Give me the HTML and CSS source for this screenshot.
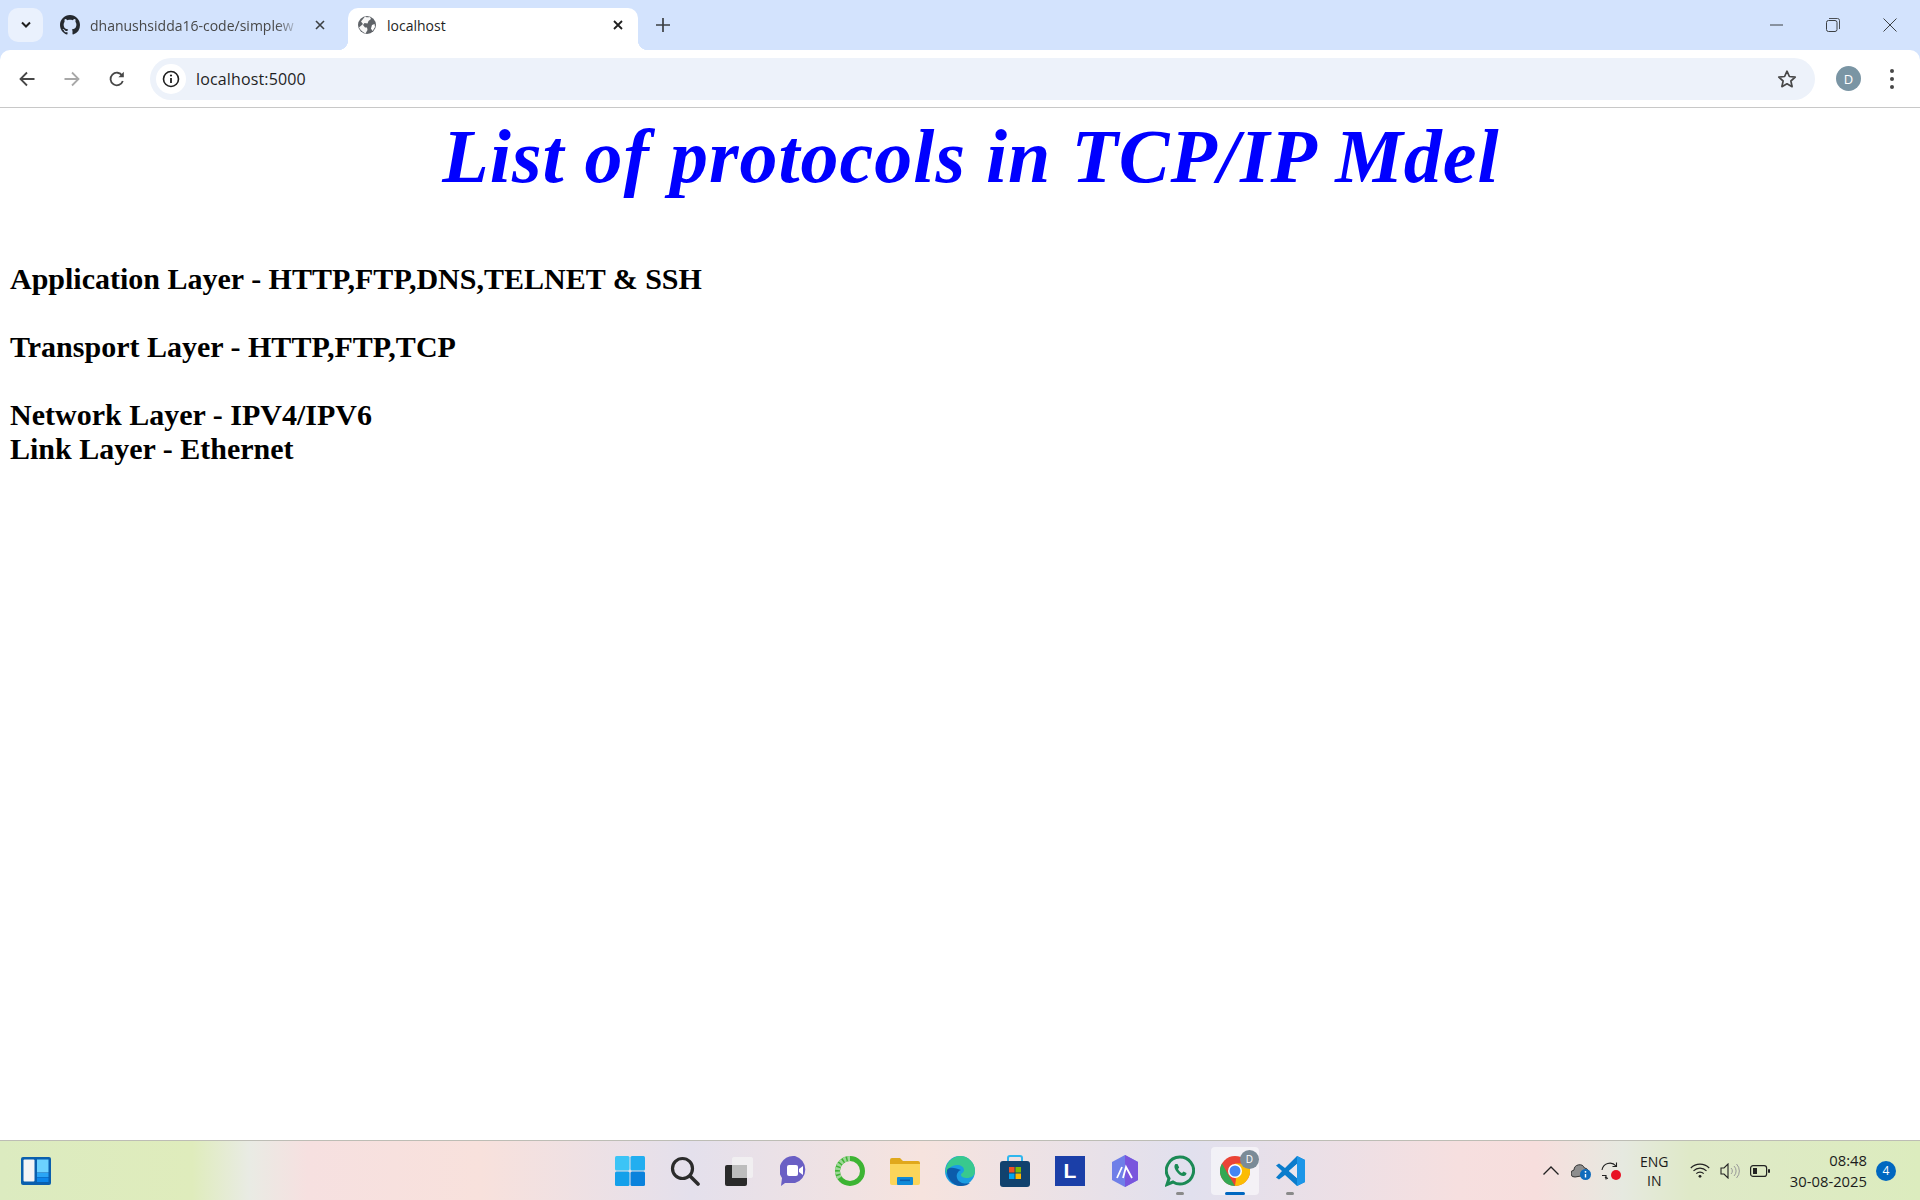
FILE: index.html
```html
<!DOCTYPE html>
<html lang="en">
<head>
<meta charset="UTF-8">
<title>localhost</title>
<link rel="stylesheet" href="styles.css">
</head>
<body>

  <header class="browser">
    <div class="tabstrip">
      <div class="tab-search">
        <svg width="12" height="8" viewBox="0 0 12 8"><path d="M2 1.5l4 4 4-4" fill="none" stroke="#1f1f1f" stroke-width="2"/></svg>
      </div>
      <div class="tab">
        <svg class="favicon" width="20" height="20" viewBox="0 0 16 16"><path fill="#24292f" d="M8 0C3.58 0 0 3.58 0 8c0 3.54 2.29 6.53 5.47 7.59.4.07.55-.17.55-.38 0-.19-.01-.82-.01-1.49-2.01.37-2.53-.49-2.69-.94-.09-.23-.48-.94-.82-1.13-.28-.15-.68-.52-.01-.53.63-.01 1.08.58 1.23.82.72 1.21 1.87.87 2.33.66.07-.52.28-.87.51-1.07-1.78-.2-3.64-.89-3.64-3.95 0-.87.31-1.59.82-2.15-.08-.2-.36-1.02.08-2.12 0 0 .67-.21 2.2.82.64-.18 1.32-.27 2-.27s1.36.09 2 .27c1.53-1.04 2.2-.82 2.2-.82.44 1.1.16 1.92.08 2.12.51.56.82 1.27.82 2.15 0 3.07-1.87 3.75-3.65 3.95.29.25.54.73.54 1.48 0 1.07-.01 1.93-.01 2.2 0 .21.15.46.55.38A8.01 8.01 0 0 0 16 8c0-4.42-3.58-8-8-8z"/></svg>
        <span class="tab-title tab-title-fade">dhanushsidda16-code/simplew</span>
        <svg class="tab-close" width="10" height="10" viewBox="0 0 10 10"><path d="M1 1l8 8M9 1l-8 8" stroke="#3c4043" stroke-width="1.6"/></svg>
      </div>
      <div class="tab tab-active">
        <svg class="favicon" width="20" height="20" viewBox="0 0 20 20"><circle cx="10" cy="10" r="9" fill="#5f6368"/><path fill="#fff" d="M8 1.5c1.5 1 3.5 1 5 .5l1 2-2.500 2-1 2.500-3-.5-1.500 2 2 2.500 2 0 .5 2.500-2 3.500c-2-1-5-3-6.500-6L6 9 4 6.500z" opacity=".95"/><path fill="#fff" d="M15 10l2.500-1 .5 3-2.500 4-1.500-2.500z"/></svg>
        <span class="tab-title tab-title-dark">localhost</span>
        <svg class="tab-close" width="10" height="10" viewBox="0 0 10 10"><path d="M1 1l8 8M9 1l-8 8" stroke="#1f1f1f" stroke-width="1.8"/></svg>
      </div>
      <svg class="new-tab" width="14" height="14" viewBox="0 0 14 14"><path d="M7 0v14M0 7h14" stroke="#3c4043" stroke-width="1.7"/></svg>
      <div class="window-controls">
        <svg width="13" height="2" viewBox="0 0 13 2"><path d="M0 1h13" stroke="#3c4043" stroke-width="1"/></svg>
        <svg width="14" height="14" viewBox="0 0 14 14"><rect x=".5" y="2.500" width="10.500" height="11" rx="2" fill="none" stroke="#3c4043"/><path d="M3 .5h8.500a2 2 0 0 1 2 2V11" fill="none" stroke="#3c4043" stroke-width=".9"/></svg>
        <svg width="14" height="14" viewBox="0 0 14 14"><path d="M.5.5l13 13M13.500.5l-13 13" stroke="#3c4043" stroke-width="1"/></svg>
      </div>
    </div>

    <div class="toolbar">
      <svg class="nav-icon" width="16" height="16" viewBox="0 0 16 16"><path d="M15.500 8H1.500M8 1.500L1.500 8 8 14.500" fill="none" stroke="#474747" stroke-width="1.800"/></svg>
      <svg class="nav-icon" width="16" height="16" viewBox="0 0 16 16"><path d="M.5 8h14M8 1.500L14.500 8 8 14.500" fill="none" stroke="#a8a8a8" stroke-width="1.800"/></svg>
      <svg class="nav-icon" width="16" height="16" viewBox="0 0 16 16"><path d="M13.800 10a6.300 6.300 0 1 1-.6-5.300" fill="none" stroke="#474747" stroke-width="1.800"/><path d="M14.800 .8v5.400H9.400z" fill="#474747"/></svg>
      <div class="omnibox">
        <span class="site-info">
          <svg width="18" height="18" viewBox="0 0 18 18"><circle cx="9" cy="9" r="7.500" fill="none" stroke="#1f1f1f" stroke-width="1.600"/><path d="M9 8v5" stroke="#1f1f1f" stroke-width="1.800"/><circle cx="9" cy="5.500" r="1.100" fill="#1f1f1f"/></svg>
        </span>
        <span class="url">localhost:5000</span>
        <svg class="star" width="20" height="20" viewBox="0 0 20 20"><path d="M10 2.200l2.400 5.300 5.800.6-4.300 3.900 1.200 5.700L10 14.800l-5.100 2.900 1.200-5.700-4.300-3.900 5.800-.6z" fill="none" stroke="#474747" stroke-width="1.700" stroke-linejoin="round"/></svg>
      </div>
      <div class="avatar">D</div>
      <div class="menu-dots"><i></i><i></i><i></i></div>
    </div>
  </header>

  <main class="page">
    <h1 class="title">List of protocols in TCP/IP Mdel</h1>
    <p class="layers">
      Application Layer - HTTP,FTP,DNS,TELNET &amp; SSH<br><br>
      Transport Layer - HTTP,FTP,TCP<br><br>
      Network Layer - IPV4/IPV6<br>
      Link Layer - Ethernet
    </p>
  </main>

  <footer class="taskbar">
    <div class="task-left">
      <svg width="30" height="28" viewBox="0 0 30 28"><rect width="30" height="28" rx="2" fill="#0a5fae"/><rect x="2.500" y="2.500" width="11" height="22" rx="1" fill="#f4f4f6"/><rect x="16" y="2.500" width="11.500" height="13" fill="#6cd2ff"/><rect x="16" y="16" width="11.500" height="4" fill="#2aa5f5"/><rect x="16" y="20.500" width="11.500" height="4.500" fill="#0c86ea"/></svg>
    </div>

    <div class="task-center">
      <div class="task-item">
        <svg width="30" height="30" viewBox="0 0 30 30"><rect x="0" y="0" width="14.500" height="14.500" rx="1.500" fill="#3cc4f6"/><rect x="15.500" y="0" width="14.500" height="14.500" rx="1.500" fill="#22aef0"/><rect x="0" y="15.500" width="14.500" height="14.500" rx="1.500" fill="#14a0ea"/><rect x="15.500" y="15.500" width="14.500" height="14.500" rx="1.500" fill="#0a82dc"/></svg>
      </div>
      <div class="task-item">
        <svg width="30" height="30" viewBox="0 0 30 30"><circle cx="12.500" cy="12.500" r="10" fill="none" stroke="#2b2b2b" stroke-width="3.200"/><path d="M20 20l8 8" stroke="#2b2b2b" stroke-width="3.600" stroke-linecap="round"/></svg>
      </div>
      <div class="task-item">
        <svg width="30" height="30" viewBox="0 0 30 30"><rect x="0" y="9" width="22" height="21" rx="2" fill="#2a2a2a"/><rect x="7" y="1" width="21" height="21" rx="2" fill="#f3f3f3" opacity=".8"/><rect x="7" y="9" width="15" height="13" fill="#bdbdbd"/></svg>
      </div>
      <div class="task-item">
        <svg width="30" height="32" viewBox="0 0 30 32"><path d="M15 1a14 14 0 0 1 0 27H5l-4 3 1-8A14 14 0 0 1 15 1z" fill="#6a5fc4"/><rect x="7" y="10" width="11" height="11" rx="2" fill="#fff"/><path d="M19 14l4-3v9l-4-3z" fill="#fff"/></svg>
      </div>
      <div class="task-item">
        <svg width="30" height="32" viewBox="0 0 30 32"><circle cx="15" cy="16" r="12.500" fill="none" stroke="#3db433" stroke-width="5"/><path d="M15 3.500A12.500 12.500 0 0 0 5 23.500" fill="none" stroke="#9ed698" stroke-width="5" stroke-dasharray="2.500 1.500"/></svg>
      </div>
      <div class="task-item">
        <svg width="30" height="28" viewBox="0 0 30 28"><path d="M0 3a2 2 0 0 1 2-2h8l3 3h15a2 2 0 0 1 2 2v3H0z" fill="#e0a81c"/><path d="M0 7h30v19a2 2 0 0 1-2 2H2a2 2 0 0 1-2-2z" fill="#fbd55a"/><rect x="7" y="20" width="16" height="8" rx="1" fill="#0f8ad8"/><rect x="10" y="22.500" width="10" height="1.600" fill="#0a5fae"/></svg>
      </div>
      <div class="task-item">
        <svg width="30" height="30" viewBox="0 0 30 30"><circle cx="15" cy="15" r="15" fill="#1b9de2"/><path d="M15 0a15 15 0 0 1 15 15c0 5-4 7-8 7-3 0-6-1-6-3s3-2 3-5-3-5-7-5c-5 0-10 4-11 9A15 15 0 0 1 15 0z" fill="#38c98e"/><path d="M2 14c-1 8 6 16 14 16 4 0 7-1 9-3-4 1-11 1-13-5-1-4 1-7 4-8-5-2-12-4-14 0z" fill="#0c5cab"/></svg>
      </div>
      <div class="task-item">
        <svg width="30" height="32" viewBox="0 0 30 32"><path d="M8 7V3a2 2 0 0 1 2-2h10a2 2 0 0 1 2 2v4" fill="none" stroke="#2fb7ee" stroke-width="2"/><rect x="0" y="6" width="30" height="26" rx="3" fill="#11426e"/><rect x="9" y="12" width="5.500" height="5.500" fill="#f25022"/><rect x="15.500" y="12" width="5.500" height="5.500" fill="#7fba00"/><rect x="9" y="18.500" width="5.500" height="5.500" fill="#00a4ef"/><rect x="15.500" y="18.500" width="5.500" height="5.500" fill="#ffb900"/></svg>
      </div>
      <div class="task-item">
        <div class="lens-tile">L</div>
      </div>
      <div class="task-item">
        <svg width="30" height="32" viewBox="0 0 30 32"><path d="M15 0l13 7v18l-13 7-13-7V7z" fill="#6f7fe8"/><path d="M15 0l13 7v18l-13 7z" fill="#7a55dd"/><path d="M7 23l5-11M13 23l3-11 6 11" fill="none" stroke="#fff" stroke-width="1.800"/></svg>
      </div>
      <div class="task-item task-running">
        <svg width="30" height="32" viewBox="0 0 30 32"><path d="M15 2a13.500 13.500 0 1 1-7 25l-6 2.500 2-6A13.500 13.500 0 0 1 15 2z" fill="none" stroke="#1b8a55" stroke-width="3"/><path d="M10.500 9c-1.500 1.500-1.500 4 1 7.500s5.500 5 7.500 4.500 2.500-2 2.500-3l-3-1.500-1.500 1.500c-1.500-.5-3-2-4-4l1.200-1.500L12.500 9z" fill="#1b8a55"/></svg>
      </div>
      <div class="task-item task-active">
        <svg width="30" height="30" viewBox="0 0 30 30"><circle cx="15" cy="15" r="15" fill="#ea4335"/><path d="M15 30a15 15 0 0 0 13-22.500H15l-4 7 5 8.500z" fill="#fbbc04"/><path d="M15 30A15 15 0 0 1 2 7.500l7 12.500z" fill="#34a853"/><circle cx="15" cy="15" r="7" fill="#fff"/><circle cx="15" cy="15" r="5.500" fill="#4285f4"/></svg>
        <span class="chrome-badge">D</span>
      </div>
      <div class="task-item task-running">
        <svg width="30" height="30" viewBox="0 0 30 30"><path d="M22 0l8 4v22l-8 4-12-11-6 4.500-3-2L7 15 1 9.500l3-2L10 12z" fill="#0a7ccc"/><path d="M22 8l-8 7 8 7z" fill="#eef0f6"/><path d="M22 0l8 4v22l-8 4z" fill="#1c96e8"/><path d="M22 8l-8 7 8 7z" fill="#e8e6ee"/></svg>
      </div>
    </div>

    <div class="tray">
      <svg class="tray-chevron" width="16" height="9" viewBox="0 0 16 9"><path d="M.5 8.500L8 1l7.500 7.500" fill="none" stroke="#222" stroke-width="1.300"/></svg>
      <svg class="tray-cloud" width="20" height="18" viewBox="0 0 20 18"><path d="M4 15a3.500 3.500 0 0 1-1-7 5.500 5.500 0 0 1 10.500-2A4 4 0 0 1 16 13z" fill="#8d8d8d" stroke="#333" stroke-width="1"/><circle cx="14.500" cy="12.500" r="5.500" fill="#0f6cbd"/><path d="M14.500 12v3.500" stroke="#fff" stroke-width="1.400"/><circle cx="14.500" cy="9.800" r=".9" fill="#fff"/></svg>
      <svg class="tray-sync" width="20" height="20" viewBox="0 0 20 20"><path d="M1 9a8 8 0 0 1 14-4M4 16a8 8 0 0 0 3 1.500" fill="none" stroke="#222" stroke-width="1.100"/><path d="M15.500 1.500v4h-4M1 14.500h4v4" fill="none" stroke="#222" stroke-width="1.100"/><circle cx="15" cy="14" r="5" fill="#e81123"/></svg>
      <div class="lang">ENG<br>IN</div>
      <svg class="tray-wifi" width="20" height="15" viewBox="0 0 20 15"><path d="M.8 5a13 13 0 0 1 18.400 0M3.500 7.800a9.200 9.200 0 0 1 13 0M6.300 10.600a5.200 5.200 0 0 1 7.400 0" fill="none" stroke="#222" stroke-width="1.200"/><circle cx="10" cy="13.300" r="1.400" fill="#222"/></svg>
      <svg class="tray-sound" width="20" height="16" viewBox="0 0 20 16"><path d="M1 5h3l4-4v14l-4-4H1z" fill="none" stroke="#222" stroke-width="1.100"/><path d="M11 5a4 4 0 0 1 0 6M14 3a7 7 0 0 1 0 10M16.500 1a10 10 0 0 1 0 14" fill="none" stroke="#999" stroke-width="1"/></svg>
      <svg class="tray-battery" width="20" height="12" viewBox="0 0 20 12"><rect x=".6" y=".6" width="16" height="10.800" rx="2.500" fill="none" stroke="#222" stroke-width="1.200"/><rect x="3" y="3" width="4" height="6" fill="#222"/><rect x="18" y="4" width="2" height="4" rx="1" fill="#222"/></svg>
      <div class="clock">08:48<br>30-08-2025</div>
      <div class="notify-badge">4</div>
    </div>
  </footer>

</body>
</html>
```

FILE: styles.css
```css
* {
  box-sizing: border-box;
  margin: 0;
  padding: 0;
}

body {
  height: 100vh;
  display: flex;
  flex-direction: column;
  overflow: hidden;
  background-color: #fff;
  font-family: "Open Sans", "Noto Sans", sans-serif;
}

.browser {
  background-color: #d3e3fd;
}

/* Tab strip */

.tabstrip {
  height: 50px;
  display: flex;
  align-items: flex-end;
}

.tab-search {
  width: 35px;
  height: 34px;
  margin: 0 5px 8px 8px;
  display: flex;
  align-items: center;
  justify-content: center;
  background-color: #eaf1fd;
  border-radius: 10px;
}

.tab {
  position: relative;
  width: 300px;
  height: 42px;
  padding: 0 23px 8px 12px;
  display: flex;
  align-items: center;
}

.tab-active {
  width: 290px;
  padding: 0 15px 0 9px;
  background-color: #fff;
  border-radius: 10px 10px 0 0;
}

.tab-active .favicon,
.tab-active .tab-title,
.tab-active .tab-close {
  margin-bottom: 8px;
}

.tab-active::before,
.tab-active::after {
  content: "";
  position: absolute;
  bottom: 0;
  width: 10px;
  height: 10px;
  background: radial-gradient(circle at 0 0, #d3e3fd 10px, #fff 10.500px);
}

.tab-active::before {
  left: -10px;
}

.tab-active::after {
  right: -10px;
  background: radial-gradient(circle at 100% 0, #d3e3fd 10px, #fff 10.500px);
}

.favicon {
  flex: none;
  margin-right: 10px;
}

.tab-title {
  flex: 1;
  white-space: nowrap;
  font-size: 14px;
  color: #474747;
}

.tab-title-fade {
  -webkit-mask-image: linear-gradient(to right, #000 88%, transparent 100%);
  mask-image: linear-gradient(to right, #000 88%, transparent 100%);
}

.tab-title-dark {
  color: #1f1f1f;
}

.tab-close {
  flex: none;
  margin-left: 14px;
}

.new-tab {
  margin: 0 0 18px 18px;
}

.window-controls {
  margin: 0 23px 18px auto;
  display: flex;
  align-items: center;
  gap: 43px;
}

/* Toolbar */

.toolbar {
  height: 58px;
  padding: 0 26px 0 19px;
  display: flex;
  align-items: center;
  background-color: #fff;
  border-bottom: 1px solid #c8c8c8;
  border-radius: 10px 10px 0 0;
}

.nav-icon {
  flex: none;
  margin-right: 29px;
}

.nav-icon:nth-child(3) {
  margin-right: 25px;
}

.omnibox {
  flex: 1;
  height: 42px;
  padding: 0 18px 0 6px;
  display: flex;
  align-items: center;
  background-color: #edf2fa;
  border-radius: 21px;
}

.site-info {
  width: 30px;
  height: 30px;
  display: flex;
  align-items: center;
  justify-content: center;
  background-color: #fff;
  border-radius: 50%;
}

.url {
  flex: 1;
  margin-left: 10px;
  font-size: 16px;
  letter-spacing: 0.15px;
  color: #1f1f1f;
}

.avatar {
  flex: none;
  width: 25px;
  height: 25px;
  margin-left: 21px;
  display: flex;
  align-items: center;
  justify-content: center;
  background-color: #7a95a4;
  border-radius: 50%;
  font-size: 13px;
  color: #fff;
}

.menu-dots {
  margin-left: 29px;
  display: flex;
  flex-direction: column;
  gap: 4px;
}

.menu-dots i {
  display: block;
  width: 4px;
  height: 4px;
  background-color: #474747;
  border-radius: 50%;
}

/* Page content */

.page {
  flex: 1;
  padding: 0 10px;
}

.title {
  height: 96px;
  padding-left: 22px;
  text-align: center;
  font-family: "Liberation Serif", serif;
  font-size: 76px;
  font-style: italic;
  font-weight: bold;
  letter-spacing: 1px;
  line-height: 96px;
  color: #00f;
}

.layers {
  margin-top: 58px;
  font-family: "Liberation Serif", serif;
  font-size: 30px;
  font-weight: bold;
  line-height: 34px;
  color: #000;
}

/* Taskbar */

.taskbar {
  height: 60px;
  display: grid;
  grid-template-columns: 1fr auto 1fr;
  align-items: center;
  background: linear-gradient(to right,
    #dcebc0 0%, #dfecbc 10%, #e9ebe4 13%, #f6e0e0 16%, #f8e1dc 25%, #e4e0ec 36%, #f6e3de 48%,
    #e1e0ee 62%, #f6dfdf 76%, #f7dedd 80%, #e6e9e0 84.500%, #dfe9c8 88%, #dcecbe 100%);
  border-top: 1px solid #bdbdb5;
}

.task-left {
  padding-left: 21px;
  display: flex;
}

.task-center {
  display: flex;
}

.task-item {
  position: relative;
  width: 55px;
  height: 48px;
  display: flex;
  align-items: center;
  justify-content: center;
}

.task-running::after,
.task-active::after {
  content: "";
  position: absolute;
  left: 50%;
  bottom: 0;
  width: 8px;
  height: 3px;
  margin-left: -4px;
  background-color: #8a8a8a;
  border-radius: 2px;
}

.task-active {
  width: 48px;
  margin: 0 3.500px;
  background-color: rgba(255, 255, 255, 0.55);
  border-radius: 4px;
}

.task-active::after {
  width: 20px;
  margin-left: -10px;
  background-color: #0067c0;
}

.chrome-badge {
  position: absolute;
  top: 3px;
  right: 0;
  width: 19px;
  height: 19px;
  display: flex;
  align-items: center;
  justify-content: center;
  background-color: #7a8b97;
  border-radius: 50%;
  font-size: 10px;
  color: #fff;
}

.lens-tile {
  width: 30px;
  height: 30px;
  display: flex;
  align-items: center;
  justify-content: center;
  background-color: #1b3fa8;
  font-family: "Liberation Sans", sans-serif;
  font-size: 21px;
  font-weight: bold;
  color: #fff;
}

.tray {
  display: flex;
  align-items: center;
  justify-content: flex-end;
  padding-right: 24px;
  color: #1b1b1b;
}

.tray-cloud {
  margin-left: 12px;
}

.tray-sync {
  margin-left: 10px;
}

.lang {
  width: 44px;
  margin-left: 11px;
  text-align: center;
  font-size: 14px;
  line-height: 19px;
}

.tray-wifi {
  margin-left: 14px;
}

.tray-sound {
  margin-left: 10px;
}

.tray-battery {
  margin-left: 9.500px;
}

.clock {
  margin-left: 20px;
  text-align: right;
  font-size: 14.800px;
  line-height: 21px;
}

.notify-badge {
  width: 20px;
  height: 20px;
  margin-left: 9px;
  display: flex;
  align-items: center;
  justify-content: center;
  background-color: #0067c0;
  border-radius: 50%;
  font-size: 12px;
  color: #fff;
}
```
